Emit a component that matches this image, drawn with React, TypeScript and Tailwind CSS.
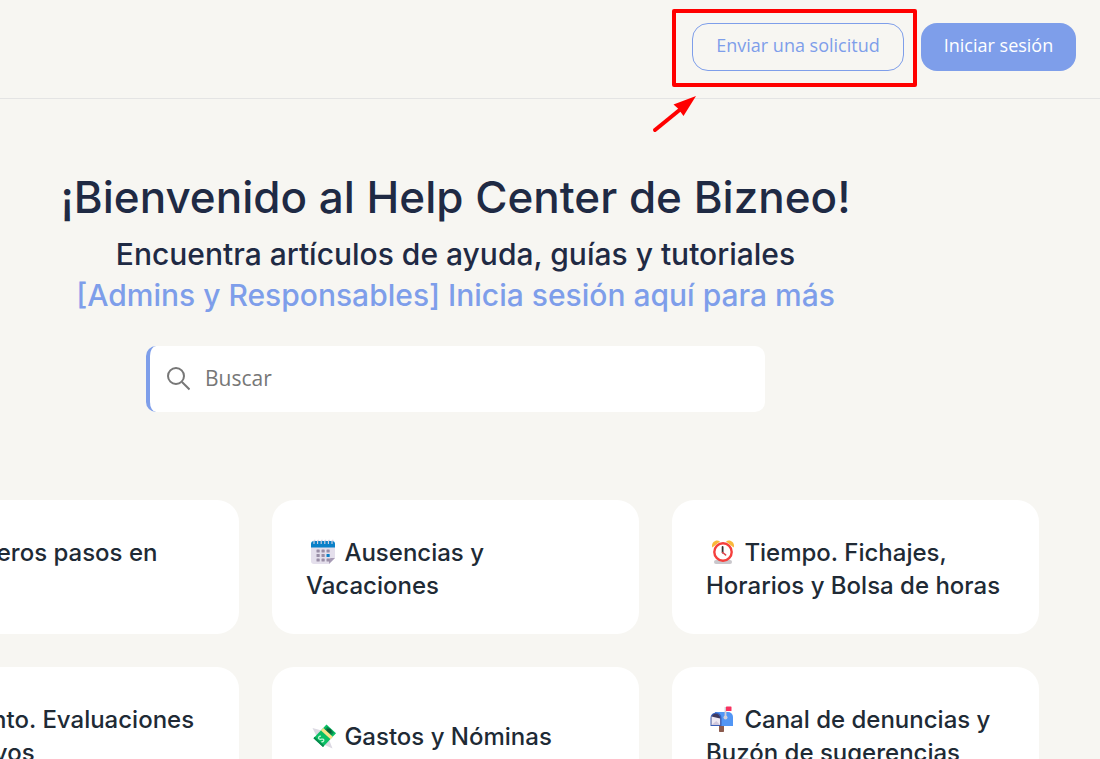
import type { ReactNode } from 'react';

const emojiClass = 'inline-block size-[26px] ml-1 mr-0.5 align-[-4px]';

function CalendarEmoji() {
  return (
    <svg viewBox="0 0 26 26" className={emojiClass} aria-hidden="true">
      <path d="M1 5h24v14l-6 6H4a3 3 0 0 1-3-3z" fill="#e4dfec" />
      <path d="M25 19l-6 6v-4a2 2 0 0 1 2-2z" fill="#a79bb5" />
      <path d="M1 8.500V5a3 3 0 0 1 3-3h18a3 3 0 0 1 3 3v3.500z" fill="#0a80c8" />
      {[4, 7.6, 11.2, 14.8, 18.4, 22].map((x) => (
        <path key={x} d={`M${x} 5V2.2a1 1 0 0 1 1.6-.8`} fill="none" stroke="#d8d3e2" strokeWidth="1.1" />
      ))}
      {[10.5, 15, 19.5].map((y) =>
        [6.5, 11.5, 16.5].map((x) => (
          <rect key={`${x}-${y}`} x={x} y={y} width="3.200" height="3" rx=".5" fill={x === 16.5 && y === 15 ? '#0a80c8' : '#998ea6'} />
        )),
      )}
    </svg>
  );
}

function ClockEmoji() {
  return (
    <svg viewBox="0 0 26 26" className={emojiClass} aria-hidden="true">
      <rect x="4" y="21" width="18" height="4" rx="2" fill="#c9c7cc" />
      <path d="M2.400 8.600C.5 4.500 5.500-.5 10 2.400z" fill="#f9b93b" />
      <path d="M23.600 8.600C25.500 4.500 20.500-.5 16 2.400z" fill="#f9b93b" />
      <circle cx="13" cy="13" r="8.700" fill="#fff" stroke="#f5403d" strokeWidth="2.400" />
      <path d="M12.600 8v5.600" stroke="#333" strokeWidth="1.800" strokeLinecap="round" />
      <path d="M12.600 13.500l3 2.400" stroke="#e2444b" strokeWidth="1.600" strokeLinecap="round" />
    </svg>
  );
}

function MoneyEmoji() {
  return (
    <svg viewBox="-1.500 0 26 26" className={emojiClass} aria-hidden="true">
      <path d="M1 5l11 3-6 7z" fill="#dcd9e2" />
      <path d="M21 25.500l-3.500-9L11 21z" fill="#dcd9e2" />
      <path d="M15 1.500l9.500 8.800L11.500 24 2 15.200z" fill="#0bbf64" />
      <path d="M2 15.200l1.200-1.400 9.500 8.800-1.200 1.400z" fill="#078a4d" />
      <path d="M16 3.500l6.300 6-2.600 3-6.500-6z" fill="#078a4d" />
      <circle cx="17.500" cy="8" r="2.600" fill="#05633a" />
      <path d="M9.500 13.300c-2-.5-3.300 1.600-1.800 2.700 1.500 1 3-.6 4.200.3 1.200 1-.2 3-2 2.300" fill="none" stroke="#c7f5d8" strokeWidth="1.300" />
      <path d="M9.500 7.400l2.300-2.500 9.500 8.800-2.200 2.500z" fill="#fbe288" />
    </svg>
  );
}

function MailboxEmoji() {
  return (
    <svg viewBox="1 -1 26 26" className={emojiClass} aria-hidden="true">
      <rect x="10" y="17" width="5" height="8" rx=".7" fill="#8b5a4d" />
      <path d="M6 5h13a5 5 0 0 1 5 5v9H6z" fill="#5296f5" />
      <path d="M1.500 19v-8a5.500 5.500 0 0 1 11 0v8z" fill="#3b5fb8" />
      <path d="M2.500 18v-7a4.300 4.300 0 0 1 8.600 0v7z" fill="#403a5e" />
      <path d="M2.500 9.500l8.600 2V18H2.500z" fill="#eee9f3" />
      <path d="M2.500 18l4.800-4 3.800 4z" fill="#cfc6db" />
      <path d="M16.500 0v10" stroke="#d2cfd9" strokeWidth="1.800" />
      <circle cx="16.500" cy="10.500" r="2" fill="#d2cfd9" />
      <rect x="17" y="-.5" width="5.500" height="4.500" rx=".6" fill="#f8315f" />
    </svg>
  );
}

function RocketEmoji() {
  return (
    <svg viewBox="0 0 26 26" className={emojiClass} aria-hidden="true">
      <path d="M8 16C8 8 14 3 23 3c0 9-5 15-13 15z" fill="#d8d3e2" />
      <circle cx="16" cy="10" r="2.500" fill="#0a80c8" />
      <path d="M3 23l4-7 3 3z" fill="#f9b93b" />
    </svg>
  );
}

function TargetEmoji() {
  return (
    <svg viewBox="0 0 26 26" className={emojiClass} aria-hidden="true">
      <circle cx="13" cy="13" r="10" fill="#fff" stroke="#f5403d" strokeWidth="3" />
      <circle cx="13" cy="13" r="4" fill="#f5403d" />
    </svg>
  );
}

const topics: { icon: ReactNode; lines: string[] }[] = [
  { icon: <RocketEmoji />, lines: ['Primeros pasos en', 'Bizneo'] },
  { icon: <CalendarEmoji />, lines: ['Ausencias y', 'Vacaciones'] },
  { icon: <ClockEmoji />, lines: ['Tiempo. Fichajes,', 'Horarios y Bolsa de horas'] },
  { icon: <TargetEmoji />, lines: ['Talento. Evaluaciones', 'y Objetivos'] },
  { icon: <MoneyEmoji />, lines: ['Gastos y Nóminas'] },
  { icon: <MailboxEmoji />, lines: ['Canal de denuncias y', 'Buzón de sugerencias'] },
];

function Header() {
  return (
    <header className="flex items-start justify-end gap-[17px] border-b border-[#e4e4e4] px-6 pt-[23px] pb-[27px] font-['Open_Sans',sans-serif] text-[18px] leading-6">
      <div className="relative">
        <button type="button" className="h-12 w-[212px] rounded-2xl border border-[#7e9eea] pb-1 text-[#7e9eea]">
          Enviar una solicitud
        </button>
        <div className="pointer-events-none absolute -top-[14px] -right-[13px] -bottom-4 -left-5 rounded-[2px] border-4 border-[#ff0000]" />
        <svg viewBox="0 0 46 40" className="pointer-events-none absolute top-[71px] -left-[40px] h-10 w-[46px]" aria-hidden="true">
          <path d="M3 36L30 14" stroke="#ff0000" strokeWidth="4" strokeLinecap="round" />
          <path d="M44 2L21.500 10.500L26 14.500L31.500 22z" fill="#ff0000" />
        </svg>
      </div>
      <button type="button" className="h-12 w-[155px] rounded-2xl bg-[#7e9eea] pb-1 font-medium text-white">
        Iniciar sesión
      </button>
    </header>
  );
}

function Hero() {
  return (
    <section className="flex flex-col items-center pt-[70px] text-center font-medium text-[#1f2a44]">
      <h1 className="text-[44px] leading-[56px]">¡Bienvenido al Help Center de Bizneo!</h1>
      <h2 className="pt-[9px] text-[30px] leading-[41px]">
        Encuentra artículos de ayuda, guías y tutoriales
        <br />
        <a href="#login" className="text-[#7e9eea]">[Admins y Responsables] Inicia sesión aquí para más</a>
      </h2>
      <form role="search" className="mt-[30px] flex h-[66px] w-full max-w-[619px] items-center rounded-[10px] border-l-4 border-[#7e9eea] bg-white pl-4">
        <svg viewBox="0 0 24 24" className="size-6 shrink-0" fill="none" stroke="#777" strokeWidth="2" aria-hidden="true">
          <circle cx="10" cy="9" r="8" />
          <path d="M16 15L23.500 22.500" />
        </svg>
        <input
          type="search"
          aria-label="Buscar"
          placeholder="Buscar"
          className="min-w-0 flex-1 bg-transparent px-[15px] font-['Open_Sans',sans-serif] text-[21px] font-normal outline-none placeholder:text-[#777]"
        />
      </form>
    </section>
  );
}

export default function App() {
  return (
    <div className="min-h-screen overflow-x-clip bg-[#f7f6f2] font-['Inter',sans-serif]">
      <div className="-ml-[189px]">
        <Header />
        <main>
          <Hero />
          <ul className="mx-auto mt-[88px] grid max-w-[1167px] grid-cols-3 gap-[33px]">
            {topics.map(({ icon, lines }) => (
              <li key={lines[0]}>
                <a href="#topic" className="flex h-full min-h-[134px] items-center rounded-[22px] bg-white px-[34px] pt-9 pb-8 text-[24px] leading-[33px] font-medium text-[#202a35]">
                  <span className="whitespace-nowrap">
                    {icon} {lines[0]}
                    {lines[1] && <br />}
                    {lines[1]}
                  </span>
                </a>
              </li>
            ))}
          </ul>
        </main>
      </div>
    </div>
  );
}
